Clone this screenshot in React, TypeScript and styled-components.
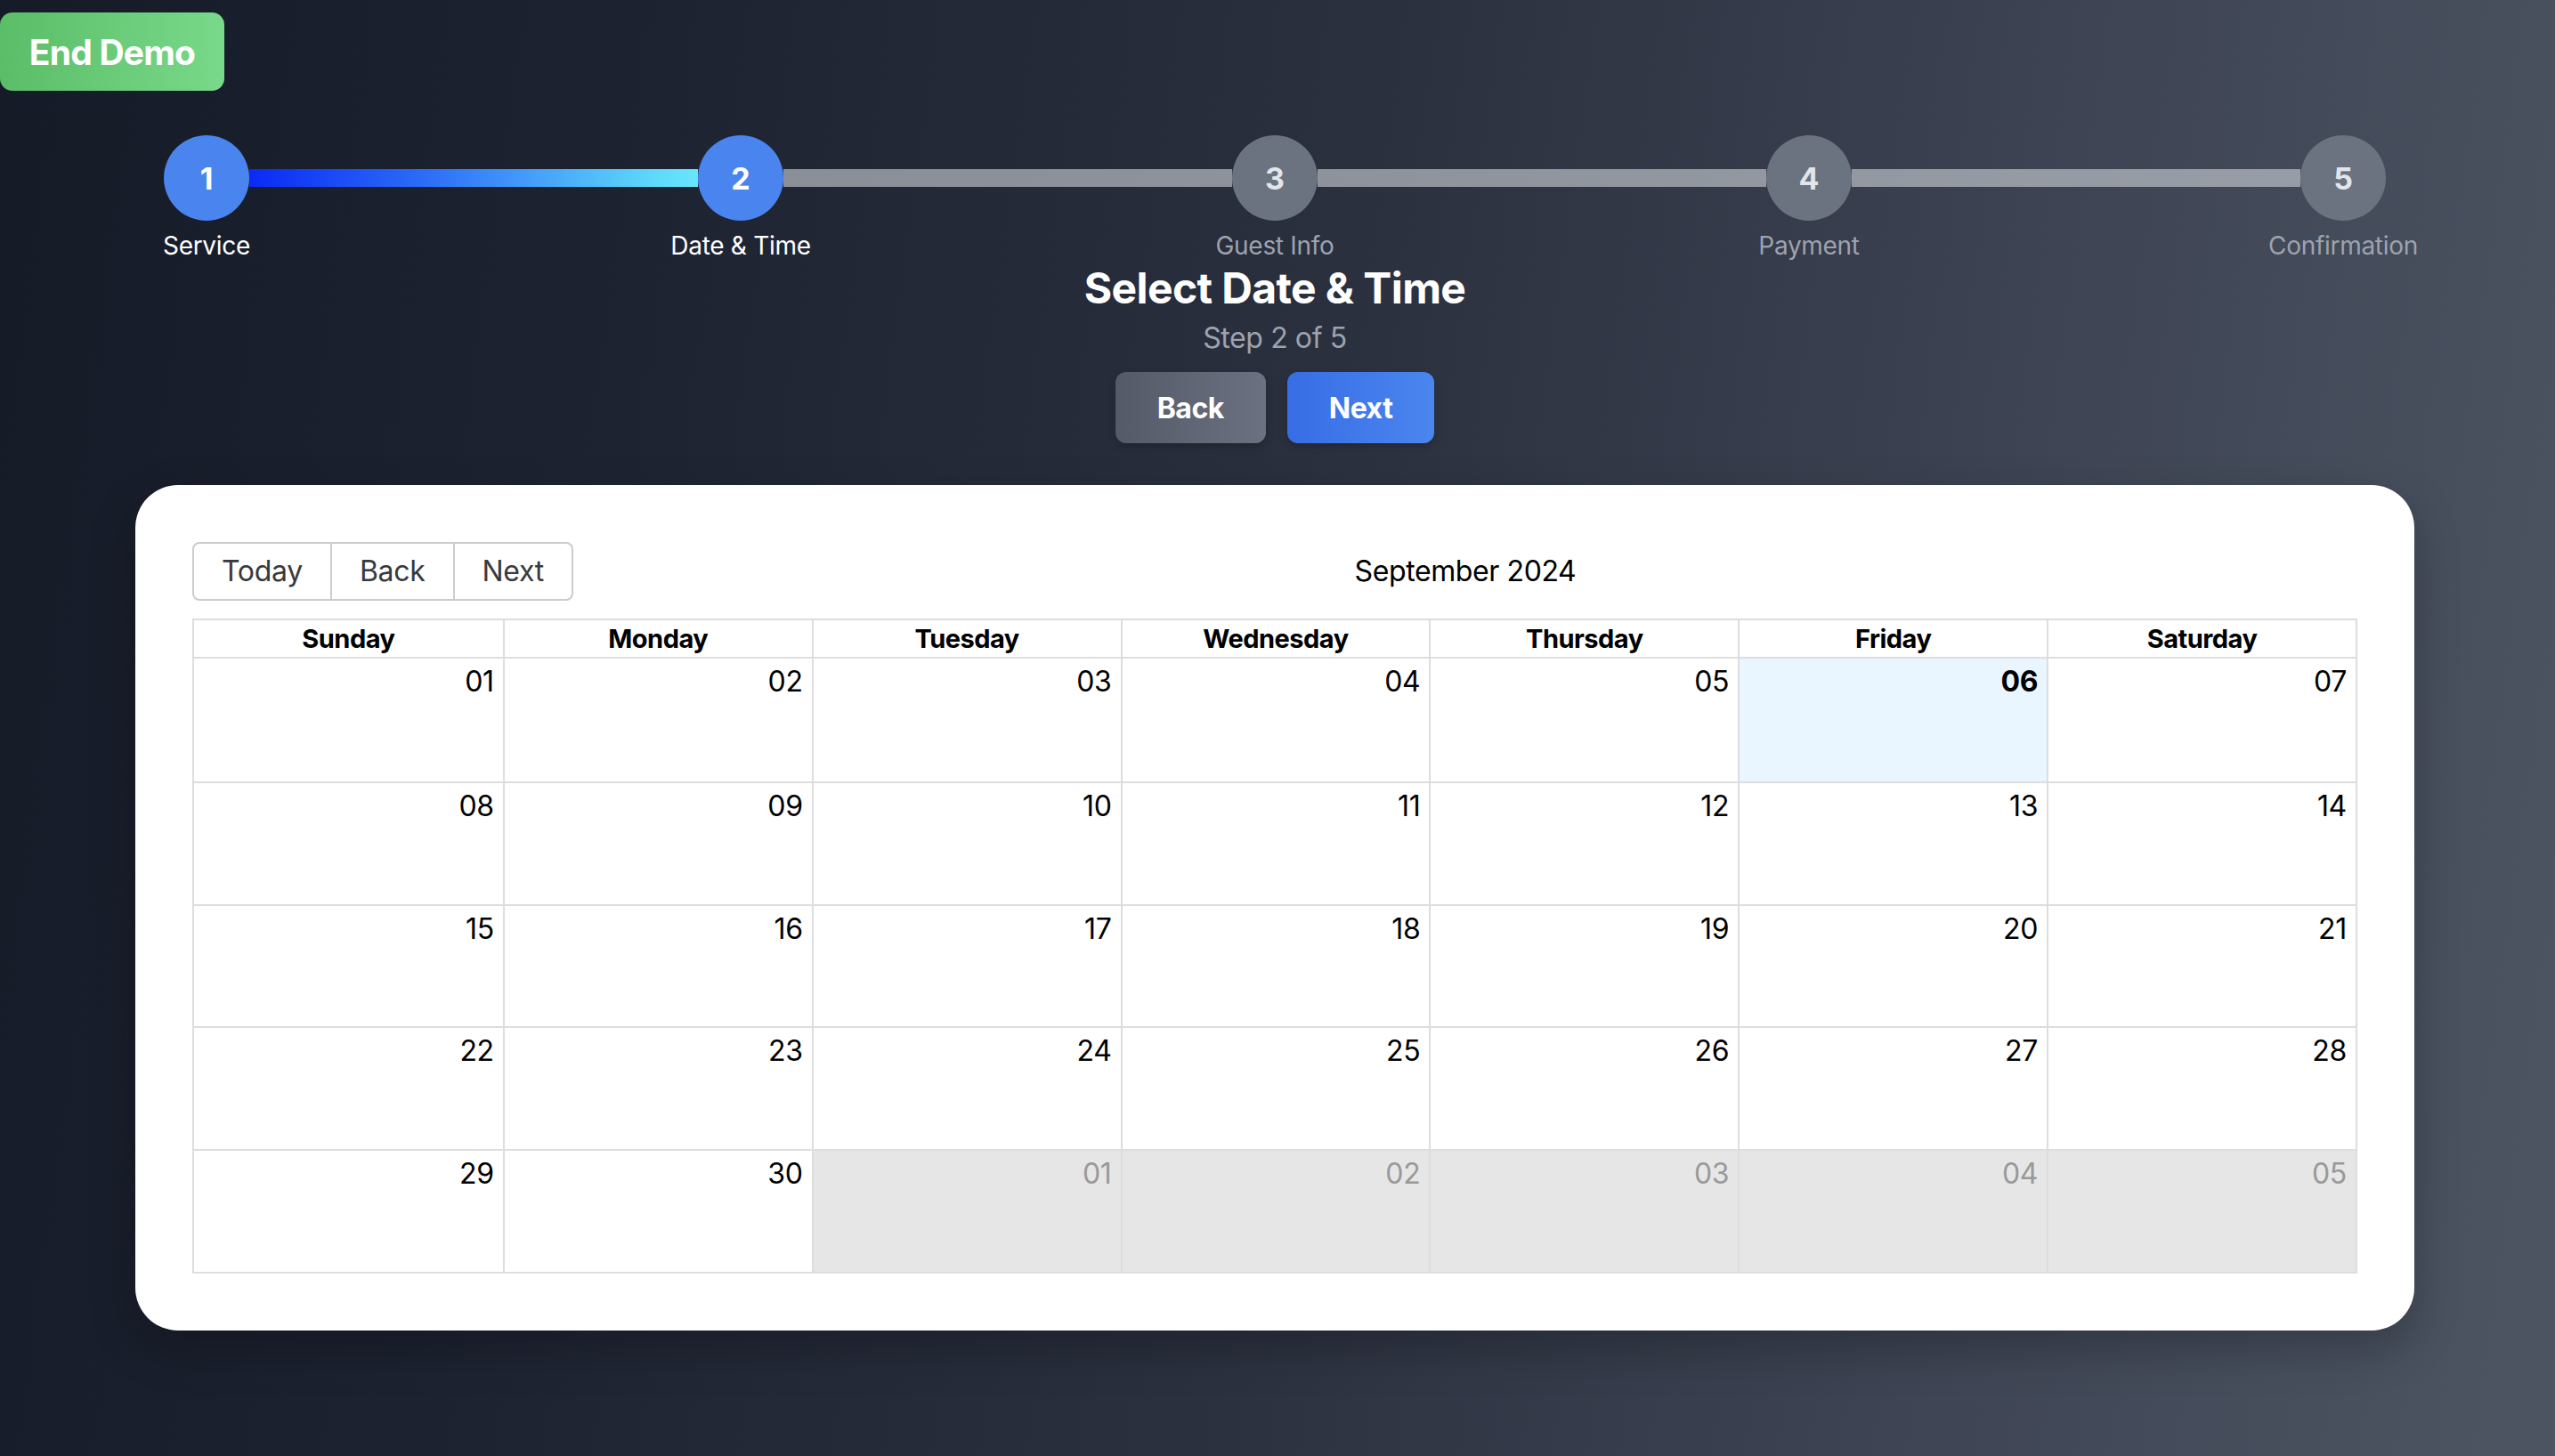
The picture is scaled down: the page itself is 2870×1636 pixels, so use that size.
import React from "react";
import styled, { createGlobalStyle } from "styled-components";

const GlobalStyle = createGlobalStyle`
  html, body {
    margin: 0;
    padding: 0;
  }
  body {
    font-family: Inter, "Noto Sans", "Liberation Sans", sans-serif;
    background: #151a27;
  }
  * { box-sizing: border-box; }
`;

const Page = styled.div`
  position: relative;
  min-height: 1636px;
  padding: 152px 6px 64px 0;
  background: linear-gradient(98deg, #161b28 0%, #1d2231 22%, #2b303f 50%, #3d4352 75%, #4d5563 100%);
`;

const EndDemo = styled.button`
  position: absolute;
  top: 14px;
  left: 0;
  width: 252px;
  height: 88px;
  border: none;
  border-radius: 14px;
  background: linear-gradient(90deg, #5bbd67, #78d98a);
  color: #ffffff;
  font-family: Inter, sans-serif;
  font-size: 39px;
  font-weight: 700;
  letter-spacing: -0.8px;
  padding: 0;
  text-align: center;
  cursor: pointer;
`;

const Container = styled.div`
  width: 2560px;
  margin: 0 auto;
  display: flex;
  flex-direction: column;
  align-items: stretch;
`;

const Stepper = styled.div`
  display: flex;
  align-items: flex-start;
  padding: 0 32px;
`;

const Step = styled.div`
  width: 96px;
  flex: none;
  display: flex;
  flex-direction: column;
  align-items: center;
`;

const Circle = styled.div<{ $active: boolean }>`
  width: 96px;
  height: 96px;
  border-radius: 50%;
  display: flex;
  align-items: center;
  justify-content: center;
  background: ${(p) => (p.$active ? "#4a84ee" : "#6b7280")};
  color: ${(p) => (p.$active ? "#ffffff" : "#e2e5ea")};
  font-size: 34px;
  font-weight: 700;
`;

const StepLabel = styled.div<{ $active: boolean }>`
  margin-top: 8px;
  white-space: nowrap;
  font-size: 28px;
  line-height: 40px;
  letter-spacing: -0.3px;
  color: ${(p) => (p.$active ? "#ffffff" : "#9ca3af")};
`;

const Connector = styled.div<{ $done: boolean }>`
  flex: 1;
  height: 20px;
  margin-top: 38px;
  background: ${(p) =>
    p.$done
      ? "linear-gradient(90deg, #0a2af5 0%, #2d6ef7 40%, #5fd8fb 90%, #67e6fb 100%)"
      : "rgba(209, 213, 219, 0.6)"};
`;

const Heading = styled.div`
  display: flex;
  flex-direction: column;
  align-items: center;
`;

const Title = styled.h1`
  margin: 0;
  font-size: 48px;
  line-height: 56px;
  font-weight: 700;
  letter-spacing: -0.6px;
  color: #ffffff;
`;

const Subtitle = styled.div`
  margin-top: 8px;
  font-size: 32px;
  line-height: 40px;
  letter-spacing: -0.4px;
  color: #9ca3af;
`;

const NavRow = styled.div`
  margin-top: 18px;
  display: flex;
  gap: 24px;
`;

const NavButton = styled.button<{ $primary?: boolean }>`
  height: 80px;
  padding: 0 47px;
  border: none;
  border-radius: 12px;
  font-family: Inter, sans-serif;
  font-size: 32px;
  font-weight: 700;
  letter-spacing: -0.5px;
  color: #ffffff;
  background: ${(p) =>
    p.$primary
      ? "linear-gradient(90deg, #386de5, #4a86ef)"
      : "linear-gradient(90deg, #545a68, #6b7180)"};
  box-shadow: 0 4px 10px rgba(0, 0, 0, 0.2);
  cursor: pointer;
`;

const Card = styled.div`
  margin-top: 47px;
  background: #ffffff;
  border-radius: 48px;
  padding: 64px;
  box-shadow: 0 20px 50px rgba(0, 0, 0, 0.25);
`;

const Toolbar = styled.div`
  display: flex;
  align-items: center;
  margin-bottom: 20px;
`;

const ButtonGroup = styled.div`
  display: flex;
`;

const ToolButton = styled.button`
  font-family: Inter, sans-serif;
  font-size: 32px;
  line-height: 38px;
  letter-spacing: -0.3px;
  color: #373a3c;
  background: #ffffff;
  border: 2px solid #cccccc;
  padding: 12px 31px;
  margin: 0;
  cursor: pointer;
  &:first-child {
    border-radius: 8px 0 0 8px;
  }
  &:last-child {
    border-radius: 0 8px 8px 0;
  }
  & + & {
    margin-left: -2px;
  }
`;

const MonthLabel = styled.div`
  flex: 1;
  text-align: center;
  font-size: 32px;
  line-height: 38px;
  letter-spacing: -0.4px;
  color: #000000;
`;

const Month = styled.div`
  border: 2px solid #dddddd;
`;

const HeaderRow = styled.div`
  display: grid;
  grid-template-columns: repeat(7, 1fr);
  border-bottom: 2px solid #dddddd;
`;

const HeaderCell = styled.div`
  height: 41px;
  display: flex;
  align-items: center;
  justify-content: center;
  font-size: 29px;
  font-weight: 700;
  letter-spacing: -0.5px;
  color: #000000;
  & + & {
    border-left: 2px solid #dddddd;
  }
`;

const WeekRow = styled.div`
  display: grid;
  grid-template-columns: repeat(7, 1fr);
  height: 137.8px;
  & + & {
    border-top: 2px solid #dddddd;
  }
`;

const DayCell = styled.div<{ $off?: boolean; $today?: boolean }>`
  background: ${(p) => (p.$off ? "#e6e6e6" : p.$today ? "#eaf6ff" : "#ffffff")};
  padding: 7px 10px 0 0;
  text-align: right;
  font-size: 32px;
  line-height: 38px;
  letter-spacing: -0.3px;
  font-weight: ${(p) => (p.$today ? 700 : 400)};
  color: ${(p) => (p.$off ? "#999999" : "#000000")};
  & + & {
    border-left: 2px solid #dddddd;
  }
`;

const steps = ["Service", "Date & Time", "Guest Info", "Payment", "Confirmation"];
const current = 2;
const dayNames = ["Sunday", "Monday", "Tuesday", "Wednesday", "Thursday", "Friday", "Saturday"];

type Day = { n: number; off?: boolean; today?: boolean };

const weeks: Day[][] = (() => {
  const all: Day[] = [];
  for (let i = 1; i <= 30; i++) all.push({ n: i, today: i === 6 });
  for (let i = 1; i <= 5; i++) all.push({ n: i, off: true });
  const rows: Day[][] = [];
  for (let r = 0; r < 5; r++) rows.push(all.slice(r * 7, r * 7 + 7));
  return rows;
})();

const pad = (n: number) => (n < 10 ? `0${n}` : `${n}`);

export default function App() {
  return (
    <>
      <GlobalStyle />
      <Page>
        <EndDemo>End Demo</EndDemo>
        <Container>
          <Stepper>
            {steps.map((label, i) => {
              const idx = i + 1;
              const active = idx <= current;
              return (
                <React.Fragment key={label}>
                  {i > 0 && <Connector $done={idx <= current} />}
                  <Step>
                    <Circle $active={active}>{idx}</Circle>
                    <StepLabel $active={active}>{label}</StepLabel>
                  </Step>
                </React.Fragment>
              );
            })}
          </Stepper>
          <Heading>
            <Title>Select Date &amp; Time</Title>
            <Subtitle>Step 2 of 5</Subtitle>
            <NavRow>
              <NavButton>Back</NavButton>
              <NavButton $primary>Next</NavButton>
            </NavRow>
          </Heading>
          <Card>
            <Toolbar>
              <ButtonGroup>
                <ToolButton>Today</ToolButton>
                <ToolButton>Back</ToolButton>
                <ToolButton>Next</ToolButton>
              </ButtonGroup>
              <MonthLabel>September 2024</MonthLabel>
            </Toolbar>
            <Month>
              <HeaderRow>
                {dayNames.map((d) => (
                  <HeaderCell key={d}>{d}</HeaderCell>
                ))}
              </HeaderRow>
              {weeks.map((w, wi) => (
                <WeekRow key={wi}>
                  {w.map((d, di) => (
                    <DayCell key={di} $off={d.off} $today={d.today}>
                      {pad(d.n)}
                    </DayCell>
                  ))}
                </WeekRow>
              ))}
            </Month>
          </Card>
        </Container>
      </Page>
    </>
  );
}
